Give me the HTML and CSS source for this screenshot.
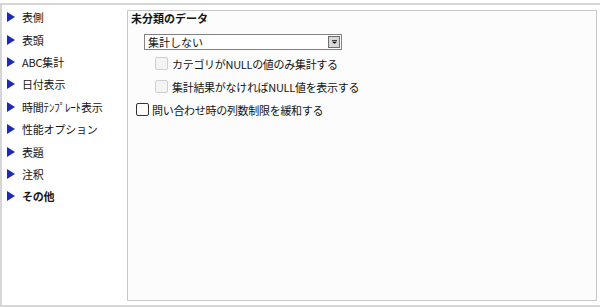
FILE: index.html
```html
<!DOCTYPE html>
<html lang="ja">
<head>
<meta charset="utf-8">
<link rel="stylesheet" href="styles.css">
</head>
<body>
<div class="frame">
  <ul class="nav">
    <li class="nav-item"><svg class="tri" viewBox="0 0 8 10"><polygon points="0,0 8,5 0,10"/></svg><span>表側</span></li>
    <li class="nav-item"><svg class="tri" viewBox="0 0 8 10"><polygon points="0,0 8,5 0,10"/></svg><span>表頭</span></li>
    <li class="nav-item"><svg class="tri" viewBox="0 0 8 10"><polygon points="0,0 8,5 0,10"/></svg><span>ABC集計</span></li>
    <li class="nav-item"><svg class="tri" viewBox="0 0 8 10"><polygon points="0,0 8,5 0,10"/></svg><span>日付表示</span></li>
    <li class="nav-item"><svg class="tri" viewBox="0 0 8 10"><polygon points="0,0 8,5 0,10"/></svg><span>時間ﾃﾝﾌﾟﾚｰﾄ表示</span></li>
    <li class="nav-item"><svg class="tri" viewBox="0 0 8 10"><polygon points="0,0 8,5 0,10"/></svg><span>性能オプション</span></li>
    <li class="nav-item"><svg class="tri" viewBox="0 0 8 10"><polygon points="0,0 8,5 0,10"/></svg><span>表題</span></li>
    <li class="nav-item"><svg class="tri" viewBox="0 0 8 10"><polygon points="0,0 8,5 0,10"/></svg><span>注釈</span></li>
    <li class="nav-item active"><svg class="tri" viewBox="0 0 8 10"><polygon points="0,0 8,5 0,10"/></svg><span>その他</span></li>
  </ul>
  <div class="panel">
    <div class="title">未分類のデータ</div>
    <div class="select">
      <span class="select-text">集計しない</span>
      <span class="select-btn"><svg viewBox="0 0 7 5" class="arrow"><rect x="0" y="0" width="7" height="1"/><polygon points="0,2 7,2 3.5,5"/></svg></span>
    </div>
    <div class="check sub first disabled"><span class="box"></span><span>カテゴリがNULLの値のみ集計する</span></div>
    <div class="check sub disabled"><span class="box"></span><span>集計結果がなければNULL値を表示する</span></div>
    <div class="check main"><span class="box"></span><span>問い合わせ時の列数制限を緩和する</span></div>
  </div>
</div>
</body>
</html>
```
FILE: styles.css
```css
* { box-sizing: border-box; }
html, body { margin: 0; padding: 0; }
body {
  width: 600px;
  height: 307px;
  background: #ffffff;
  font-family: "Noto Sans CJK JP", "Noto Sans", sans-serif;
  font-size: 11px;
  color: #141414;
  padding-top: 3px;
}
.frame {
  height: 304px;
  display: flex;
  border-top: 2px solid #d6d6d6;
  border-left: 2px solid #d6d6d6;
  border-bottom: 2px solid #d6d6d6;
}
.nav {
  list-style: none;
  margin: 0;
  padding: 1px 0 0 5px;
  width: 125px;
  flex: none;
}
.nav-item {
  display: flex;
  align-items: center;
  height: 22.4px;
  gap: 7px;
  white-space: nowrap;
}
.nav-item span { letter-spacing: -0.2px; }
.nav-item.active span { font-weight: bold; }
.tri { width: 8px; height: 10px; fill: #1c2cb0; flex: none; }
.panel {
  flex: 1;
  margin: 5px 3px 4px 0;
  border: 1px solid #c8c8c8;
  background: #fcfcfc;
  padding: 0 0 0 3px;
}
.title {
  font-weight: bold;
  height: 14px;
  line-height: 14px;
}
.select {
  margin: 9px 0 0 13px;
  width: 198px;
  height: 16px;
  border: 1px solid #828282;
  background: #fff;
  display: flex;
  align-items: center;
  justify-content: space-between;
}
.select-text { padding-left: 3px; line-height: 14px; }
.select-btn {
  width: 12px;
  height: 12px;
  margin-right: 1px;
  background: #d8d8d8;
  border: 1px solid #6e6e6e;
  display: flex;
  align-items: center;
  justify-content: center;
}
.arrow { width: 5px; height: 4px; fill: #000; }
.check {
  display: flex;
  align-items: center;
  gap: 4px;
  height: 23px;
  white-space: nowrap;
  letter-spacing: -0.3px;
}
.check.sub { padding-left: 24px; }
.check.main { padding-left: 5px; gap: 3px; }
.check.first { margin-top: 2px; }
.box {
  width: 13px;
  height: 13px;
  border: 1px solid #333;
  border-radius: 2px;
  background: #fff;
  flex: none;
}
.disabled .box { border-color: #cfcfcf; background: #f4f4f4; }
```
